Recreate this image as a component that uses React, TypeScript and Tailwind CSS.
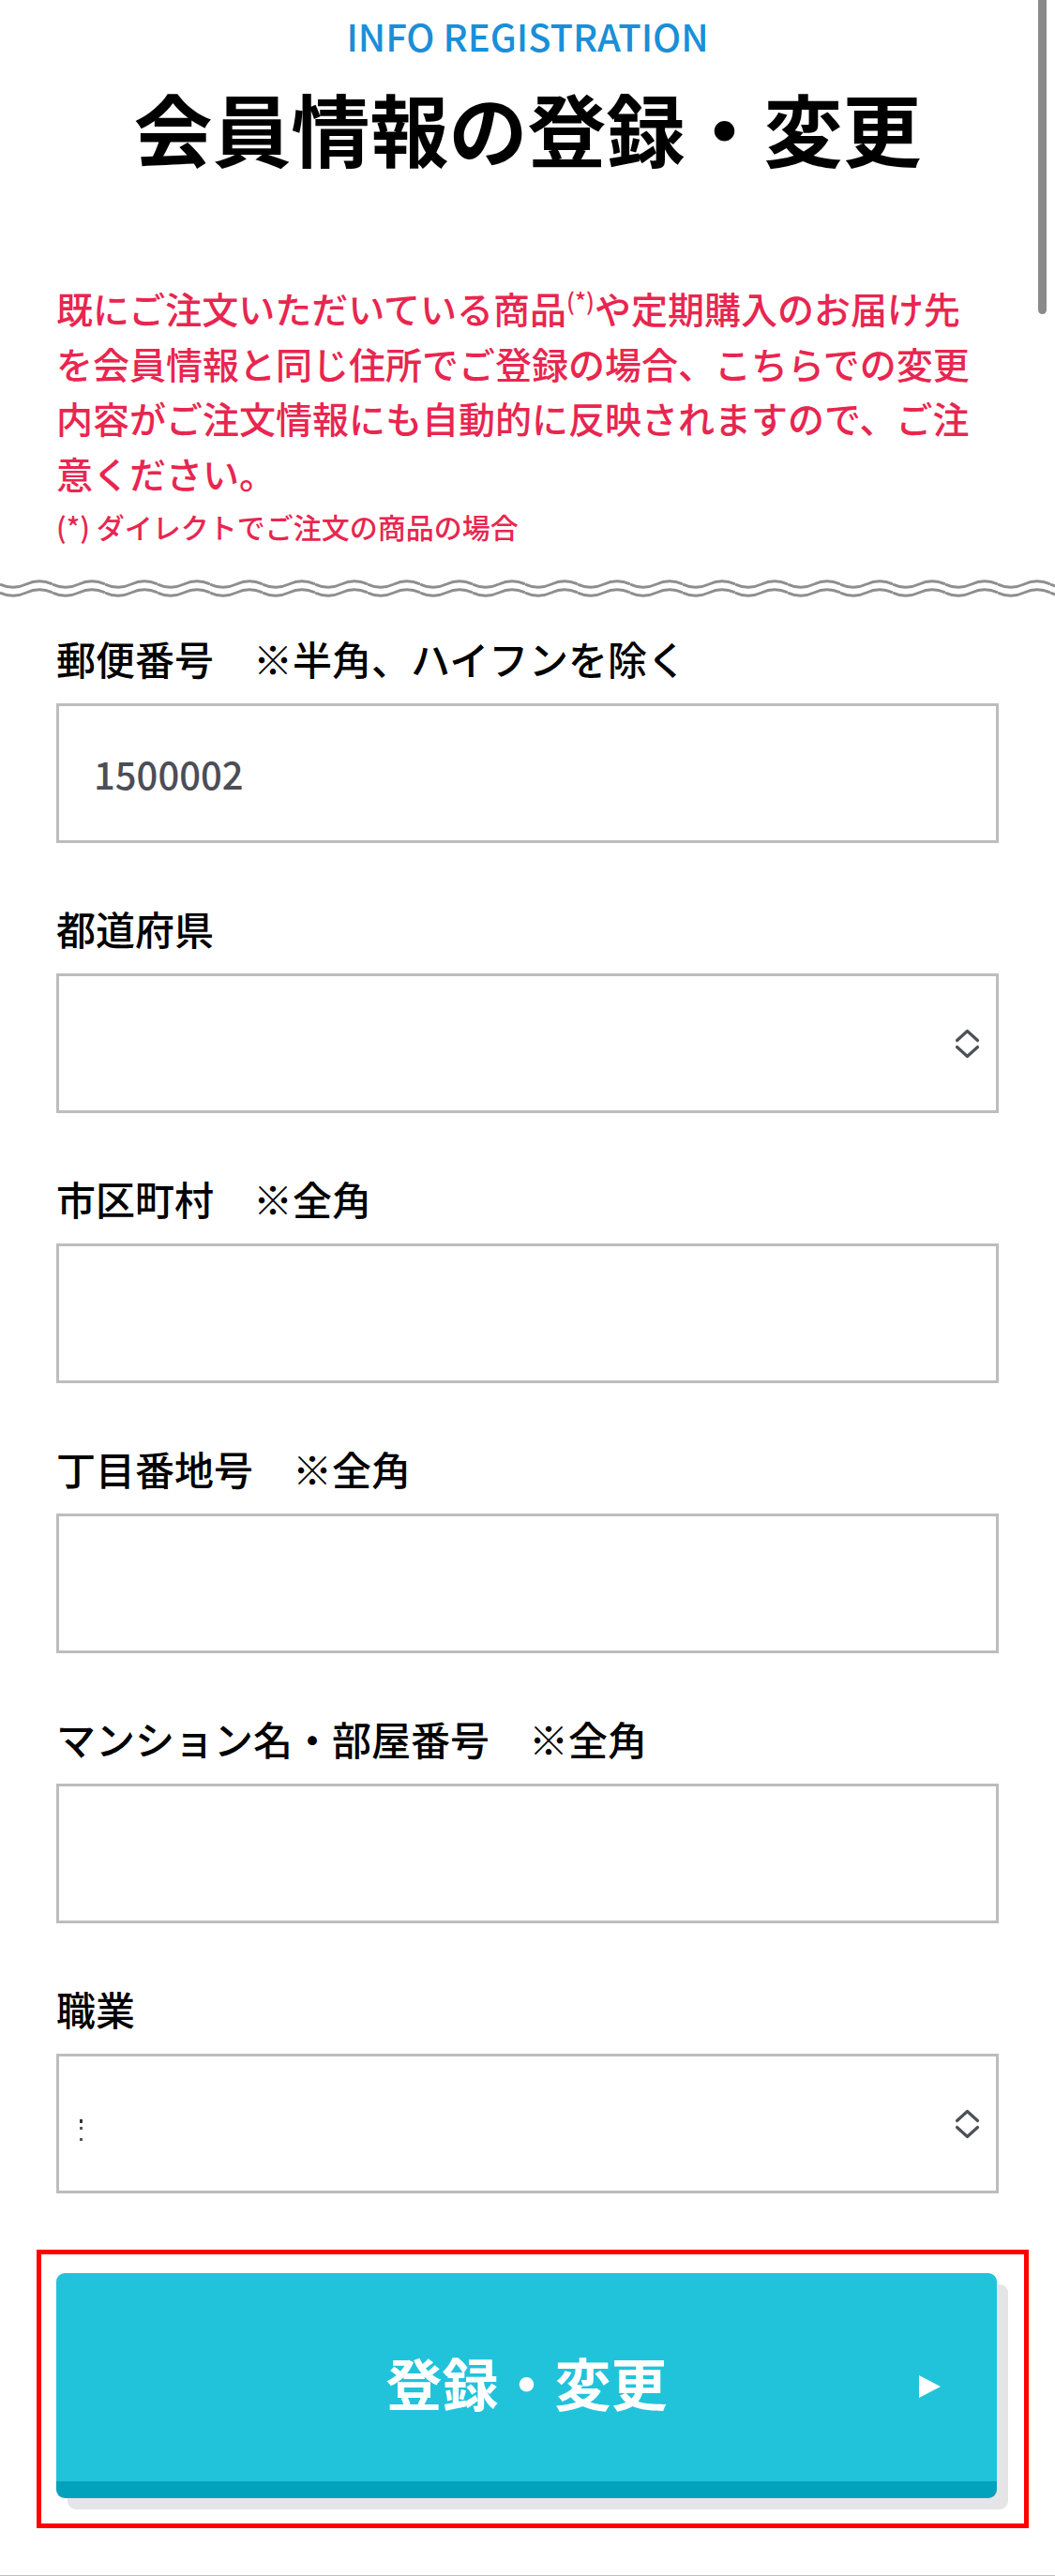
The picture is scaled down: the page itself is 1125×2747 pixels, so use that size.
import React from "react";

const FONT = { fontFamily: '"Noto Sans CJK JP", "Noto Sans", sans-serif' };

function Chevrons() {
  return (
    <svg width="27" height="32" viewBox="0 0 27 32" fill="none" stroke="#4d5058" strokeWidth="3.2" strokeLinecap="round" strokeLinejoin="round">
      <path d="M2.5 12.5 L13.5 2.5 L24.5 12.5" />
      <path d="M2.5 19.5 L13.5 29.5 L24.5 19.5" />
    </svg>
  );
}

function Field({ label, children, select }: { label: string; children?: React.ReactNode; select?: boolean }) {
  return (
    <div className="flex flex-col">
      <div className="h-[60px] leading-[60px] text-[42px] font-medium text-black whitespace-pre">{label}</div>
      <div className="mt-[18px] h-[149px] border-[3px] border-[#bdbdbd] bg-white flex items-center pl-[37px] pr-[17px]">
        <div className="flex-1 flex items-center">{children}</div>
        {select ? <Chevrons /> : null}
      </div>
    </div>
  );
}

export default function App() {
  return (
    <div className="relative w-[1125px] h-[2747px] bg-white overflow-hidden" style={FONT}>
      <div className="absolute right-[9px] top-0 w-[9px] h-[335px] bg-[#8a8a8a] rounded-b-full" />

      <header className="pt-[11px] text-center">
        <p className="text-[40px] leading-[54px] font-medium text-[#1a8fd8]">INFO REGISTRATION</p>
        <h1 className="mt-[20px] text-[84px] leading-[101px] font-bold text-black">会員情報の登録・変更</h1>
      </header>

      <div className="px-[60px] mt-[113px] text-[#e8264f]">
        <p className="text-[39px] leading-[58.5px] font-medium">
          既にご注文いただいている商品
          <sup className="text-[25px] top-[-0.55em]">(*)</sup>
          や定期購入のお届け先
          <br />
          を会員情報と同じ住所でご登録の場合、こちらでの変更
          <br />
          内容がご注文情報にも自動的に反映されますので、ご注
          <br />
          意ください。
        </p>
        <p className="mt-[6px] text-[30px] leading-[45px] font-medium">(*) ダイレクトでご注文の商品の場合</p>
      </div>

      <div className="mt-[30px] h-[24px]">
        <svg width="1125" height="24" viewBox="0 0 1125 24">
          <defs>
            <pattern id="wave" x="0" y="0" width="56" height="24" patternUnits="userSpaceOnUse">
              <path d="M0 9 Q14 15.5 28 9 T56 9" fill="none" stroke="#8e8e8e" strokeWidth="3" />
              <path d="M0 18 Q14 24.5 28 18 T56 18" fill="none" stroke="#8e8e8e" strokeWidth="3" />
            </pattern>
          </defs>
          <rect x="0" y="0" width="1125" height="24" fill="url(#wave)" />
        </svg>
      </div>

      <div className="px-[60px] pt-[34px] flex flex-col gap-[61px]">
        <Field label="郵便番号　※半角、ハイフンを除く">
          <span className="text-[40px] font-medium text-[#4b4e57]">1500002</span>
        </Field>
        <Field label="都道府県" select />
        <Field label="市区町村　※全角" />
        <Field label="丁目番地号　※全角" />
        <Field label="マンション名・部屋番号　※全角" />
        <Field label="職業" select>
          <svg width="8" height="26" viewBox="0 0 8 26" className="-ml-[17px] mt-[16px]">
            <rect x="2" y="0" width="3" height="4" fill="#333" />
            <rect x="2" y="8" width="3" height="3" fill="#555" />
            <rect x="2" y="20" width="3" height="3" fill="#555" />
          </svg>
        </Field>
      </div>

      <div className="mt-[60px] ml-[39px] w-[1058px] border-[5px] border-[#ff0000] pt-[20px] pl-[16px] pr-[29px] pb-[27px]">
        <div className="relative h-[240px] rounded-[9px] bg-[#21c3da] border-b-[18px] border-[#03a2bc] shadow-[12px_12px_0_#e5e5e7] flex items-center justify-center pt-[10px]">
          <span className="text-[60px] leading-none font-bold text-white">登録・変更</span>
          <svg className="absolute right-[60px] top-[109px]" width="23" height="24" viewBox="0 0 23 24">
            <path d="M0 0 L23 12 L0 24 Z" fill="#ffffff" />
          </svg>
        </div>
      </div>

      <div className="mt-[50px] h-[2px] bg-[#b9c0c8]" />
    </div>
  );
}
